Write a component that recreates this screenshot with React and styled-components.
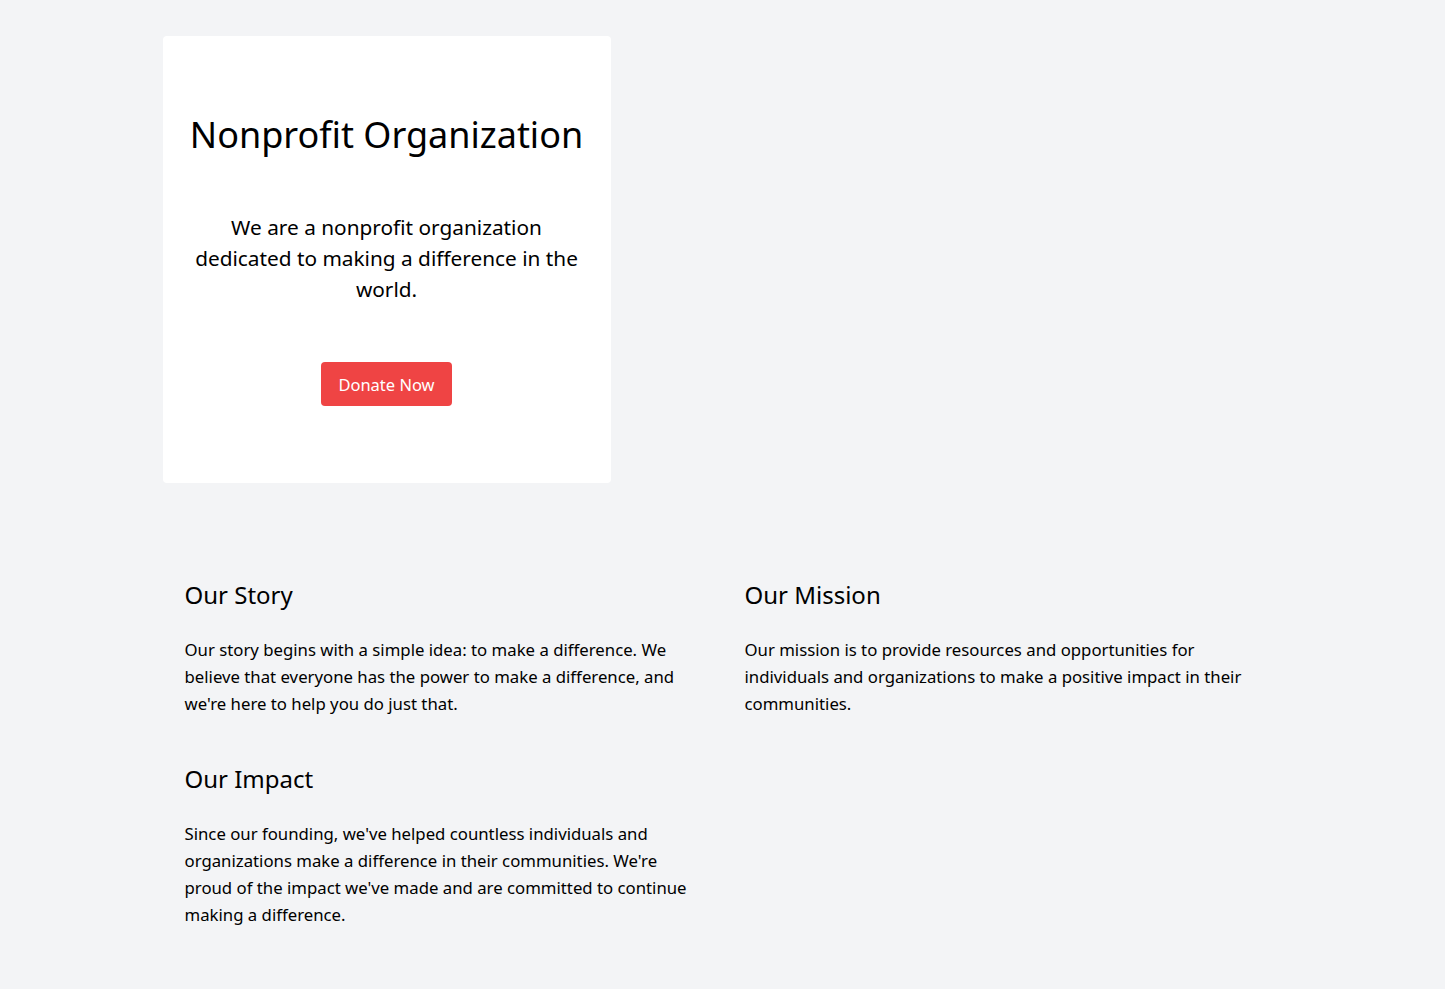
import React from 'react';
import styled, { createGlobalStyle } from 'styled-components';

const GlobalStyle = createGlobalStyle`
  body {
    margin: 0;
    background-color: #f3f4f6;
    color: #000;
    font-family: "Noto Sans", "Liberation Sans", sans-serif;
  }
`;

const Page = styled.main`
  width: 1120px;
  margin: 0 auto;
  padding: 36px 0 60px;
`;

const HeroCard = styled.section`
  width: 448px;
  box-sizing: border-box;
  background-color: #fff;
  border-radius: 4px;
  padding: 79px 24px 77px;
  display: flex;
  flex-direction: column;
  align-items: center;
  text-align: center;
`;

const Title = styled.h1`
  margin: 0;
  font-size: 36px;
  line-height: 40px;
  font-weight: 400;
  white-space: nowrap;
`;

const Lead = styled.p`
  margin: 57px 0 0;
  max-width: 395px;
  font-size: 20.8px;
  line-height: 31px;
`;

const DonateButton = styled.button`
  margin-top: 57px;
  width: 131px;
  height: 44px;
  border: none;
  border-radius: 4px;
  background-color: #ef4444;
  color: #fff;
  font-family: inherit;
  font-size: 16.5px;
  cursor: pointer;
`;

const InfoGrid = styled.div`
  display: grid;
  grid-template-columns: 1fr 1fr;
  column-gap: 44px;
  row-gap: 46px;
  margin-top: 96px;
  padding: 0 22px;
`;

const Block = styled.article``;

const BlockTitle = styled.h2`
  margin: 0 0 25px;
  font-size: 24px;
  line-height: 32px;
  font-weight: 400;
`;

const BlockText = styled.p`
  margin: 0;
  font-size: 16.75px;
  line-height: 27px;
`;

const blocks = [
  {
    title: 'Our Story',
    text: "Our story begins with a simple idea: to make a difference. We believe that everyone has the power to make a difference, and we're here to help you do just that.",
  },
  {
    title: 'Our Mission',
    text: 'Our mission is to provide resources and opportunities for individuals and organizations to make a positive impact in their communities.',
  },
  {
    title: 'Our Impact',
    text: "Since our founding, we've helped countless individuals and organizations make a difference in their communities. We're proud of the impact we've made and are committed to continue making a difference.",
  },
];

const App = () => (
  <Page>
    <GlobalStyle />
    <HeroCard>
      <Title>Nonprofit Organization</Title>
      <Lead>We are a nonprofit organization dedicated to making a difference in the world.</Lead>
      <DonateButton>Donate Now</DonateButton>
    </HeroCard>
    <InfoGrid>
      {blocks.map(({ title, text }) => (
        <Block key={title}>
          <BlockTitle>{title}</BlockTitle>
          <BlockText>{text}</BlockText>
        </Block>
      ))}
    </InfoGrid>
  </Page>
);

export default App;
